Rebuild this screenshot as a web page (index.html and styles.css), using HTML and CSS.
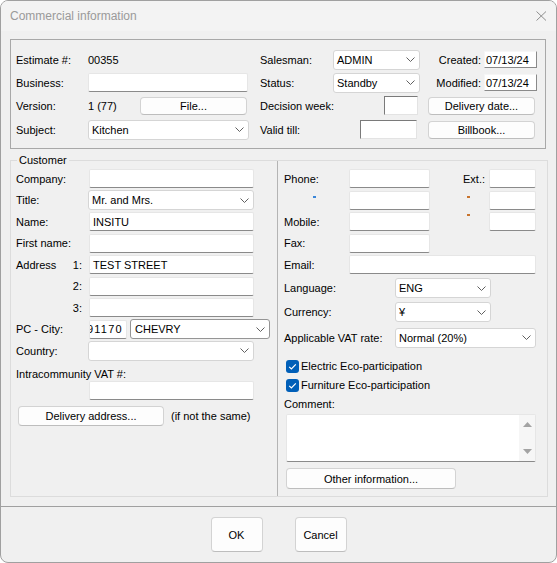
FILE: index.html
```html
<html>
  <head>
    <link rel="stylesheet" href="styles.css">
  </head>
  <body>
    <div class="window">
      <div class="titlebar">
        <span class="title">Commercial information</span>
        <svg class="close" width="11" height="10" viewBox="0 0 11 10">
          <path d="M0.5 0.5 L10 9.5 M10 0.5 L0.5 9.5" stroke="#8e8e8e" stroke-width="1" fill="none"/>
        </svg>
      </div>

      <div class="content">
        <div class="top-box">
          <span>Estimate #:</span>
          <span>00355</span>
          <div class="cell">
            <span>Salesman:</span>
            <div class="combo salesman"><span>ADMIN</span><svg class="chev" width="9" height="5"><polyline points="0.5,0.5 4.5,4.5 8.5,0.5" fill="none" stroke="#606060"/></svg></div>
          </div>
          <div class="cell end">
            <span>Created:</span>
            <div class="date">07/13/24</div>
          </div>

          <span>Business:</span>
          <div class="field business"></div>
          <div class="cell">
            <span>Status:</span>
            <div class="combo salesman"><span>Standby</span><svg class="chev" width="9" height="5"><polyline points="0.5,0.5 4.5,4.5 8.5,0.5" fill="none" stroke="#606060"/></svg></div>
          </div>
          <div class="cell end">
            <span>Modified:</span>
            <div class="date">07/13/24</div>
          </div>

          <span>Version:</span>
          <div class="cell">
            <span>1 (77)</span>
            <button class="btn file">File...</button>
          </div>
          <div class="cell">
            <span>Decision week:</span>
            <div class="sunken week"></div>
          </div>
          <div class="cell">
            <button class="btn side">Delivery date...</button>
          </div>

          <span>Subject:</span>
          <div class="combo subject"><span>Kitchen</span><svg class="chev" width="9" height="5"><polyline points="0.5,0.5 4.5,4.5 8.5,0.5" fill="none" stroke="#606060"/></svg></div>
          <div class="cell">
            <span>Valid till:</span>
            <div class="sunken till"></div>
          </div>
          <div class="cell">
            <button class="btn side">Billbook...</button>
          </div>
        </div>

        <div class="customer">
          <span class="legend">Customer</span>

          <div class="left-col">
            <div class="left-grid">
              <span>Company:</span>
              <div class="field"></div>

              <span>Title:</span>
              <div class="combo wide"><span>Mr. and Mrs.</span><svg class="chev" width="9" height="5"><polyline points="0.5,0.5 4.5,4.5 8.5,0.5" fill="none" stroke="#606060"/></svg></div>

              <span>Name:</span>
              <div class="field">INSITU</div>

              <span>First name:</span>
              <div class="field"></div>

              <div class="cell addr"><span>Address</span><span>1:</span></div>
              <div class="field">TEST STREET</div>

              <span class="num">2:</span>
              <div class="field"></div>

              <span class="num">3:</span>
              <div class="field"></div>

              <span>PC - City:</span>
              <div class="cell">
                <div class="field postal"><span>91170</span></div>
                <div class="combo city"><span>CHEVRY</span><svg class="chev" width="9" height="5"><polyline points="0.5,0.5 4.5,4.5 8.5,0.5" fill="none" stroke="#606060"/></svg></div>
              </div>

              <span>Country:</span>
              <div class="combo wide"><span></span><svg class="chev" width="9" height="5"><polyline points="0.5,0.5 4.5,4.5 8.5,0.5" fill="none" stroke="#606060"/></svg></div>
            </div>

            <div class="vat-label">Intracommunity VAT #:</div>
            <div class="field vat"></div>

            <div class="delivery-row">
              <button class="btn delivery">Delivery address...</button>
              <span>(if not the same)</span>
            </div>
          </div>

          <div class="right-col">
            <div class="right-grid">
              <span>Phone:</span>
              <div class="field"></div>
              <span class="ext">Ext.:</span>
              <div class="field"></div>

              <span class="dot blue"></span>
              <div class="field"></div>
              <span class="dot orange"></span>
              <div class="field"></div>

              <span>Mobile:</span>
              <div class="field"></div>
              <span class="dot orange high"></span>
              <div class="field"></div>

              <span>Fax:</span>
              <div class="field"></div>
              <span></span>
              <span></span>

              <span>Email:</span>
              <div class="field email"></div>

              <span>Language:</span>
              <div class="combo short"><span>ENG</span><svg class="chev" width="9" height="5"><polyline points="0.5,0.5 4.5,4.5 8.5,0.5" fill="none" stroke="#606060"/></svg></div>

              <span>Currency:</span>
              <div class="combo short"><span>¥</span><svg class="chev" width="9" height="5"><polyline points="0.5,0.5 4.5,4.5 8.5,0.5" fill="none" stroke="#606060"/></svg></div>

              <span class="nowrap">Applicable VAT rate:</span>
              <div class="combo rate"><span>Normal (20%)</span><svg class="chev" width="9" height="5"><polyline points="0.5,0.5 4.5,4.5 8.5,0.5" fill="none" stroke="#606060"/></svg></div>
            </div>

            <div class="check-row first">
              <span class="checkbox"><svg width="13" height="13"><polyline points="3.2,6.8 5.4,9 9.8,4.4" fill="none" stroke="#fff" stroke-width="1.2"/></svg></span>
              <span>Electric Eco-participation</span>
            </div>
            <div class="check-row">
              <span class="checkbox"><svg width="13" height="13"><polyline points="3.2,6.8 5.4,9 9.8,4.4" fill="none" stroke="#fff" stroke-width="1.2"/></svg></span>
              <span>Furniture Eco-participation</span>
            </div>
            <div class="comment-label">Comment:</div>
            <div class="memo">
              <div class="scroll">
                <svg width="9" height="5"><polygon points="0,5 4.5,0 9,5" fill="#a3a3a3"/></svg>
                <svg width="9" height="5"><polygon points="0,0 4.5,5 9,0" fill="#a3a3a3"/></svg>
              </div>
            </div>
            <button class="btn other">Other information...</button>
          </div>
        </div>
      </div>

      <div class="footer">
        <button class="btn big">OK</button>
        <button class="btn big">Cancel</button>
      </div>
    </div>
  </body>
</html>
```

FILE: styles.css
```css
* {
  box-sizing: border-box;
}
body {
  margin: 0;
  background: #fff;
  font-family: "Liberation Sans", Arial, sans-serif;
  font-size: 11px;
  line-height: 14px;
  color: #000;
}
.window {
  width: 557px;
  height: 563px;
  border: 1px solid #a0a0a0;
  border-radius: 8px;
  background: #f0f0f0;
  display: flex;
  flex-direction: column;
  overflow: hidden;
}
.titlebar {
  flex: none;
  height: 30px;
  padding: 0 9px;
  background: #f3f3f3;
  display: flex;
  align-items: center;
  justify-content: space-between;
}
.title {
  font-size: 12px;
  color: #9a9a9a;
}
.close {
  margin-top: -1px;
}
.content {
  flex: none;
  height: 475px;
  padding: 8px 0 0 9px;
}

/* controls */
.cell {
  display: flex;
  align-items: center;
}
.cell.end {
  justify-content: flex-end;
  gap: 3px;
}
.field {
  height: 19px;
  background: #fff;
  border: 1px solid #e6e6e6;
  border-bottom-color: #8a8a8a;
  border-radius: 2px;
  padding: 0 3px;
  display: flex;
  align-items: center;
  white-space: nowrap;
  overflow: hidden;
}
.combo {
  height: 20px;
  background: #fff;
  border: 1px solid #d5d5d5;
  border-radius: 3px;
  padding: 0 4px 0 3px;
  display: flex;
  align-items: center;
  justify-content: space-between;
  white-space: nowrap;
}
.date {
  width: 53px;
  height: 17px;
  background: #fff;
  border: 1px solid;
  border-color: #f6f6f6 #8a8a8a #8a8a8a #f6f6f6;
  padding-left: 1px;
  display: flex;
  align-items: center;
}
.sunken {
  height: 19px;
  background: #fff;
  border: 1px solid;
  border-color: #7a7a7a #e3e3e3 #e3e3e3 #7a7a7a;
}
.btn {
  font: inherit;
  color: #000;
  height: 18px;
  padding: 0;
  background: #fdfdfd;
  border: 1px solid #d3d3d3;
  border-bottom-color: #bdbdbd;
  border-radius: 4px;
}

/* top box */
.top-box {
  width: 536px;
  height: 110px;
  border: 1px solid #a8a8a8;
  padding: 8px 0 0 5px;
  display: grid;
  grid-template-columns: 72px 172px 168px 109px;
  grid-template-rows: 23px 23px 23px 25px;
  align-items: center;
}
.salesman {
  width: 87px;
  margin-left: auto;
  margin-right: 8px;
}
.business {
  width: 160px;
}
.file {
  width: 107px;
  margin-left: auto;
  margin-right: 13px;
}
.week {
  width: 34px;
  margin-left: auto;
  margin-right: 10px;
}
.till {
  width: 57px;
  margin-left: auto;
  margin-right: 11px;
}
.side {
  width: 107px;
}
.subject {
  width: 161px;
}

/* customer box */
.customer {
  position: relative;
  margin-top: 11px;
  width: 538px;
  height: 337px;
  border: 1px solid #dcdcdc;
  display: flex;
}
.legend {
  position: absolute;
  top: -8px;
  left: 6px;
  padding: 0 2px;
  background: #f0f0f0;
}
.left-col {
  width: 266px;
  padding: 7px 0 0 5px;
}
.left-grid {
  display: grid;
  grid-template-columns: 73px 165px;
  grid-template-rows: repeat(9, 21.5px);
  align-items: center;
}
.addr {
  justify-content: space-between;
  padding-right: 7px;
}
.num {
  justify-self: end;
  margin-right: 7px;
}
.wide {
  width: 166px;
  margin-left: -1px;
}
.postal {
  width: 38px;
  flex: none;
  padding: 0;
}
.postal span {
  margin-left: -3px;
  letter-spacing: 1.2px;
}
.city {
  width: 140px;
  flex: none;
  margin-left: 3px;
  padding-left: 4px;
  border-color: #959595;
}
.vat-label {
  margin-top: 6.5px;
  height: 13px;
  line-height: 13px;
}
.field.vat {
  width: 165px;
  margin-left: 73px;
}
.delivery-row {
  margin-top: 6px;
  display: flex;
  align-items: center;
  gap: 7px;
}
.delivery {
  width: 146px;
  height: 20px;
  margin-left: 2px;
}

.right-col {
  flex: 1;
  border-left: 1px solid #b4b4b4;
  padding: 7px 0 0 6px;
}
.right-grid {
  display: grid;
  grid-template-columns: 65px 81px 59px 47px;
  grid-template-rows: repeat(5, 21.5px) 25px 23.5px 27px;
  align-items: center;
}
.ext {
  justify-self: end;
  margin-right: 4px;
}
.dot {
  width: 3px;
  height: 2px;
  align-self: start;
  margin-top: 6px;
}
.dot.high {
  margin-top: 3px;
}
.dot.blue {
  background: #3a86d8;
  margin-left: 29px;
}
.dot.orange {
  background: #c8742e;
  margin-left: 37px;
}
.email {
  grid-column: 2 / 5;
}
.short {
  grid-column: 2 / 5;
  width: 96px;
  margin-left: 46px;
}
.rate {
  grid-column: 2 / 5;
  width: 141px;
  margin-left: 46px;
}
.nowrap {
  white-space: nowrap;
}
.check-row {
  height: 19px;
  margin-left: 2px;
  display: flex;
  align-items: center;
  gap: 2px;
}
.check-row.first {
  margin-top: 5.5px;
}
.checkbox {
  width: 13px;
  height: 13px;
  border-radius: 3px;
  background: #005fb8;
  display: flex;
}
.comment-label {
  height: 19px;
  line-height: 19px;
}
.memo {
  width: 250px;
  height: 48px;
  margin: 0.5px 0 0 2px;
  background: #fff;
  border: 1px solid #e6e6e6;
  border-bottom-color: #8a8a8a;
  border-radius: 2px;
  display: flex;
  justify-content: flex-end;
}
.scroll {
  width: 16px;
  background: #f6f6f6;
  display: flex;
  flex-direction: column;
  align-items: center;
  justify-content: space-between;
  padding: 7px 0 7px;
}
.other {
  width: 170px;
  height: 21px;
  margin: 6px 0 0 2px;
}

/* footer */
.footer {
  flex: none;
  height: 56px;
  border-top: 1px solid #a0a0a0;
  padding-top: 10px;
  display: flex;
  justify-content: center;
  gap: 32px;
}
.big {
  width: 52px;
  height: 35px;
}
```
